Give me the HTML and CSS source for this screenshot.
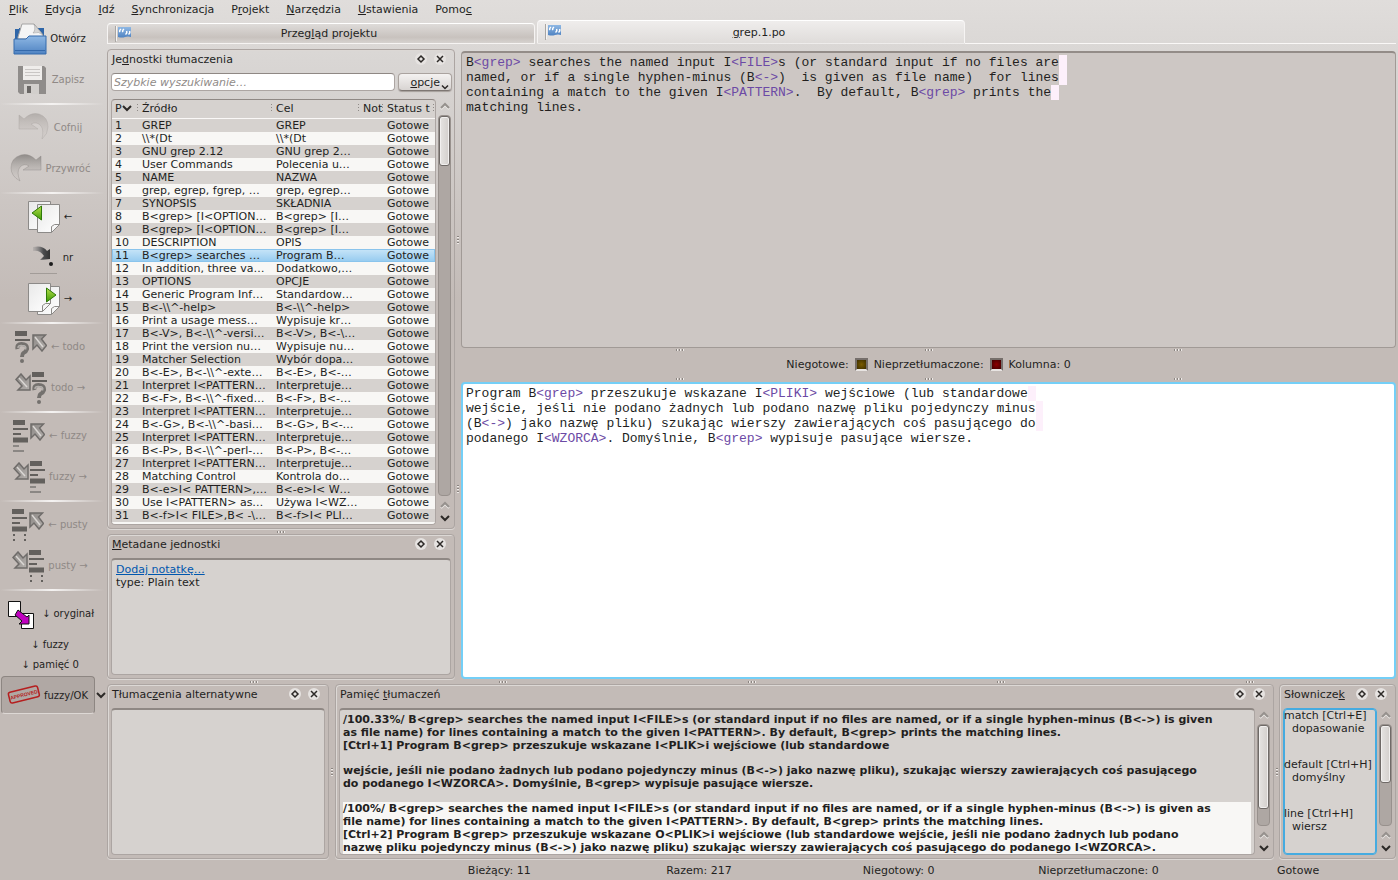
FILE: index.html
```html
<!DOCTYPE html>
<html lang="pl">
<head>
    <meta charset="UTF-8">
    <meta name="viewport" content="width=device-width, initial-scale=1.0">
    <title>grep.1.po - Lokalize</title>
    <link rel="stylesheet" href="styles.css">
</head>
<body>
    <svg class="defs" width="0" height="0" aria-hidden="true">
        <defs>
            <linearGradient id="gBlue" x1="0" y1="0" x2="0" y2="1"><stop offset="0" stop-color="#8fb8e4"/><stop offset="1" stop-color="#4f83c2"/></linearGradient>
            <linearGradient id="gUndo" x1="0" y1="0" x2="0" y2="1"><stop offset="0" stop-color="#b3aeab"/><stop offset="1" stop-color="#c8c2be" stop-opacity="0"/></linearGradient>
            <linearGradient id="gRedo" x1="0" y1="0" x2="0" y2="1"><stop offset="0" stop-color="#8f8b88"/><stop offset="1" stop-color="#c4bfbc" stop-opacity="0"/></linearGradient>
            <linearGradient id="gGreen" x1="0" y1="0" x2="0" y2="1"><stop offset="0" stop-color="#b5e04a"/><stop offset="1" stop-color="#3f9a06"/></linearGradient>
            <linearGradient id="gPage" x1="0" y1="0" x2="1" y2="1"><stop offset="0" stop-color="#e9e9e9"/><stop offset="1" stop-color="#ffffff"/></linearGradient>
            <linearGradient id="gArrow" x1="0" y1="0" x2="1" y2="1"><stop offset="0" stop-color="#8c8885"/><stop offset="1" stop-color="#b3afac"/></linearGradient>
            <linearGradient id="gJump" x1="0" y1="0" x2="1" y2="0"><stop offset="0" stop-color="#77777a" stop-opacity="0.2"/><stop offset="0.6" stop-color="#4c4d4f"/><stop offset="1" stop-color="#333333"/></linearGradient>
        </defs>
        <symbol id="flag" viewBox="0 0 16 16">
            <path d="M.5 0v16" stroke="#a9a6a3"/><path d="M1.500 0v15" stroke="#f4f4f4"/>
            <path d="M3 1h13v10q-3-1-6 0t-7 0z" fill="url(#gBlue)"/>
            <path d="M5 6q-1-1.500 1-3M8 6q-1-1.500 1-3M11.500 5q1 2-1 3.500M14.500 5q1 2-1 3.500" fill="none" stroke="#fff" stroke-width="1.500"/>
        </symbol>
        <symbol id="upleft" viewBox="0 0 15 18">
            <path d="M1 1h12.500L9.500 5l5 6.500-4.500 5.500-5-6-4 4z" fill="url(#gArrow)" stroke="#6f6c6a" stroke-width="1.500"/>
            <path d="M3 3l8 10" stroke="#dad7d4" stroke-width="1.500"/>
        </symbol>
        <symbol id="downright" viewBox="0 0 16 18">
            <path d="M6 1l5 6 4-4v14H3l4-4-6-6.500z" fill="url(#gArrow)" stroke="#6f6c6a" stroke-width="1.500"/>
            <path d="M4 5l8 9" stroke="#dad7d4" stroke-width="1.500"/>
        </symbol>
        <symbol id="bars" viewBox="0 0 15 32">
            <path d="M0 2.500h12M0 20h15" stroke="#63605d" stroke-width="5"/>
            <path d="M0 9h15M0 14h8" stroke="#63605d" stroke-width="2"/>
        </symbol>
        <symbol id="question" viewBox="0 0 15 32">
            <path d="M0 2.500h12" stroke="#63605d" stroke-width="5"/><path d="M0 9h15" stroke="#63605d" stroke-width="2"/>
            <path d="M2.500 18q-1-5 4-5 6 0 5.500 5-1 3-3.500 4-1.500 1-1.500 4" fill="none" stroke="#74716e" stroke-width="4"/>
            <path d="M3 17q0-3 4-2.500 5 0 3.500 4" fill="none" stroke="#b3afac" stroke-width="1.500"/>
            <circle cx="7" cy="30" r="2" fill="#74716e"/>
        </symbol>
        <symbol id="page" viewBox="0 0 23 29">
            <path d="M.5.500h22v20l-8 8H.5z" fill="url(#gPage)" stroke="#8c8a88"/>
            <path d="M22.500 20.500h-5l-3 2v6z" fill="#f6f6f6" stroke="#8c8a88"/>
        </symbol>
        <symbol id="down" viewBox="0 0 10 8"><path d="M1 2l4 4 4-4" fill="none" stroke="#2c2927" stroke-width="2"/></symbol>
        <symbol id="up" viewBox="0 0 10 8"><path d="M1 7l4-4 4 4" fill="none" stroke="#f0eeec" stroke-width="2"/><path d="M1 6l4-4 4 4" fill="none" stroke="#96918d" stroke-width="2"/></symbol>
        <symbol id="float" viewBox="0 0 12 12"><circle cx="6" cy="6" r="6" fill="#e6e3e1"/><path d="M6 3l3 3-3 3-3-3z" fill="none" stroke="#2c2927" stroke-width="1.500"/></symbol>
        <symbol id="close" viewBox="0 0 12 12"><circle cx="6" cy="6" r="6" fill="#e6e3e1"/><path d="M3 3l6 6M9 3l-6 6" fill="none" stroke="#2c2927" stroke-width="1.500"/></symbol>
    </svg>

    <nav class="menubar">
        <button><u>P</u>lik</button>
        <button><u>E</u>dycja</button>
        <button><u>I</u>dź</button>
        <button><u>S</u>ynchronizacja</button>
        <button>P<u>r</u>ojekt</button>
        <button><u>N</u>arzędzia</button>
        <button><u>U</u>stawienia</button>
        <button>Pomo<u>c</u></button>
    </nav>

    <div class="window">
        <div class="toolbar">
            <button class="tool">
                <svg class="icon" viewBox="0 0 32 32">
                    <path d="M1 6h4v-1h25v20H1z" fill="#2f66a8"/>
                    <path d="M4 14L8 1h12l9 11v4H4z" fill="#f5f5f5" stroke="#a5a5a5"/><path d="M20 1q2 6-1 9 6-2 10 2z" fill="#d5d5d5" stroke="#999" stroke-width=".5"/>
                    <path d="M0 16h12l3-3h17v18H0z" fill="url(#gBlue)" stroke="#356aac"/><path d="M1 27.500h30" stroke="#3469ab"/>
                </svg>Otwórz
            </button>
            <button class="tool" disabled>
                <svg class="icon" viewBox="0 0 32 32">
                    <path d="M2 2h26l2 2v26H4l-2-2z" fill="#8f8c8a"/><path d="M7 2h19v14H7z" fill="#efedeb"/>
                    <path d="M9 5.500h15M9 8.500h15M9 11.500h15" stroke="#c9c6c4"/><path d="M8 20h15v10H8z" fill="#d2cfcc"/><path d="M11 22h4v7h-4z" fill="#6a6765"/>
                </svg>Zapisz
            </button>
            <hr>
            <button class="tool" disabled>
                <svg class="icon" viewBox="0 0 32 32">
                    <path d="M1 3l5 4q7-7 15-5 9 3 9 13 0 7-6 12 2-9-1-13-4-5-10-2l7 5H1z" fill="url(#gUndo)" stroke="#a9a5a2" stroke-opacity=".4"/>
                </svg>Cofnij
            </button>
            <button class="tool" disabled>
                <svg class="icon" viewBox="0 0 32 32">
                    <path d="M31 3l-5 4Q19 0 11 2 1 5 1 15q0 8 9 13-4-9 0-14 4-4 9-1l-6 4h18z" fill="url(#gRedo)" stroke="#8e8a87" stroke-opacity=".4"/>
                </svg>Przywróć
            </button>
            <hr>
            <button class="tool">
                <svg class="icon" viewBox="0 0 32 32">
                    <use href="#page" x="0" y="0" width="23" height="29"/><use href="#page" x="9" y="3" width="23" height="29"/>
                    <path d="M4 12L13.500 5v14z" fill="url(#gGreen)" stroke="#2f7a08"/>
                </svg>←
            </button>
            <button class="tool">
                <svg class="icon" viewBox="0 0 32 32">
                    <path d="M6 5q10-2 14 4l3-2v10l-10 1 4-4q-4-6-11-5z" fill="url(#gJump)"/><circle cx="24" cy="22" r="2" fill="#1c1c1c"/>
                    <path d="M3 31.500h27" stroke="#a29c98"/>
                </svg>nr
            </button>
            <button class="tool">
                <svg class="icon" viewBox="0 0 32 32">
                    <use href="#page" x="9" y="3" width="23" height="29"/><use href="#page" x="0" y="0" width="23" height="29"/>
                    <path d="M28 12L18.500 5v14z" fill="url(#gGreen)" stroke="#2f7a08"/>
                </svg>→
            </button>
            <hr>
            <button class="tool" disabled>
                <svg class="icon" viewBox="0 0 32 32"><use href="#question" width="15" height="32"/><use href="#upleft" x="17" y="3" width="15" height="18"/></svg>← todo
            </button>
            <button class="tool" disabled>
                <svg class="icon" viewBox="0 0 32 32"><use href="#downright" y="1" width="16" height="18"/><use href="#question" x="17" width="15" height="32"/></svg>todo →
            </button>
            <hr>
            <button class="tool" disabled>
                <svg class="icon" viewBox="0 0 32 32"><use href="#bars" width="15" height="32"/><path d="M0 26h6M0 31h11" stroke="#8b8784" stroke-width="2"/><use href="#upleft" x="17" y="3" width="15" height="18"/></svg>← fuzzy
            </button>
            <button class="tool" disabled>
                <svg class="icon" viewBox="0 0 32 32"><use href="#downright" y="1" width="16" height="18"/><use href="#bars" x="17" width="15" height="32"/><path d="M17 26h6M17 31h11" stroke="#8b8784" stroke-width="2"/></svg>fuzzy →
            </button>
            <hr>
            <button class="tool" disabled>
                <svg class="icon" viewBox="0 0 32 32"><use href="#bars" width="15" height="32"/><path d="M2 25v7M13 25v7" stroke="#63605d" stroke-width="2" stroke-dasharray="2 3"/><use href="#upleft" x="17" y="3" width="15" height="18"/></svg>← pusty
            </button>
            <button class="tool" disabled>
                <svg class="icon" viewBox="0 0 32 32"><use href="#downright" y="1" width="16" height="18"/><use href="#bars" x="17" width="15" height="32"/><path d="M19 25v7M30 25v7" stroke="#63605d" stroke-width="2" stroke-dasharray="2 3"/></svg>pusty →
            </button>
            <hr>
            <button class="tool">
                <svg class="icon" viewBox="0 0 32 32">
                    <path d="M2.500 3.500h12v15h-12zM15.500 15.500h12v15h-12z" fill="#fff" stroke="#111"/>
                    <path d="M12 12l9 7 2-2v9H13l3-3-7-6z" fill="#c000c0" stroke="#111"/>
                </svg>↓ oryginał
            </button>
            <button class="tool short">↓ fuzzy</button>
            <button class="tool short">↓ pamięć 0</button>
            <div class="approve">
                <button class="tool pressed">
                    <svg class="icon" viewBox="0 0 32 32">
                        <g transform="rotate(-14 16 16)"><rect x="1" y="10" width="30" height="11" rx="2" fill="none" stroke="#b51f1f" stroke-width="1.500"/>
                        <text x="16" y="17.500" class="stamp">APPROVED</text></g>
                    </svg>fuzzy/OK
                </button>
                <button class="drop" aria-label="Stan"><svg width="10" height="8"><use href="#down"/></svg></button>
            </div>
        </div>

        <div class="main">
            <div class="tabs">
                <button class="tab"><svg width="16" height="16"><use href="#flag"/></svg><span>Przeg<u>l</u>ąd projektu</span></button>
                <button class="tab active"><svg width="16" height="16"><use href="#flag"/></svg><span><u>g</u>rep.1.po</span></button>
                <div class="tab-rest"></div>
            </div>

            <div class="upper">
                <div class="left">
                    <section class="dock units">
                        <header><h2>Je<u>d</u>nostki tłumaczenia</h2><button aria-label="Odepnij"><svg width="12" height="12"><use href="#float"/></svg></button><button aria-label="Zamknij"><svg width="12" height="12"><use href="#close"/></svg></button></header>
                        <div class="search">
                            <input type="text" placeholder="Szybkie wyszukiwanie…" aria-label="Szybkie wyszukiwanie">
                            <button class="options"><u>o</u>pcje<svg width="8" height="6"><use href="#down"/></svg></button>
                        </div>
                        <div class="body">
                            <div class="panel list">
                                <table>
                                    <colgroup><col class="c-id"><col class="c-source"><col class="c-target"><col class="c-notes"><col></colgroup>
                                    <thead>
                                        <tr><th>P<svg width="10" height="8"><use href="#down"/></svg></th><th>Źródło</th><th>Cel</th><th>Not</th><th>Status t</th></tr>
                                    </thead>
                                    <tbody id="units"></tbody>
                                </table>
                            </div>
                            <div class="scroll"><svg width="10" height="8"><use href="#up"/></svg><div class="track"><div class="thumb s-units"></div></div><svg width="10" height="8"><use href="#up"/></svg><svg width="10" height="8"><use href="#down"/></svg></div>
                        </div>
                    </section>
                    <div class="split-h"><i></i></div>
                    <section class="dock meta">
                        <header><h2><u>M</u>etadane jednostki</h2><button aria-label="Odepnij"><svg width="12" height="12"><use href="#float"/></svg></button><button aria-label="Zamknij"><svg width="12" height="12"><use href="#close"/></svg></button></header>
                        <div class="body"><div class="panel notes"><a href="#">Dodaj notatkę…</a><br>type: Plain text</div></div>
                    </section>
                </div>
                <div class="split-v"><i></i><i></i></div>
                <div class="editor">
                    <div class="source">B<b>&lt;grep&gt;</b> searches the named input I<b>&lt;FILE&gt;</b>s (or standard input if no files are<mark> </mark>
named, or if a single hyphen-minus (B<b>&lt;-&gt;</b>)  is given as file name)  for lines<mark> </mark>
containing a match to the given I<b>&lt;PATTERN&gt;</b>.  By default, B<b>&lt;grep&gt;</b> prints the<mark> </mark>
matching lines.</div>
                    <div class="split-h"><i></i><i></i><i></i></div>
                    <div class="leds">
                        <span>Niegotowe:</span><span class="led amber"></span><span>Nieprzetłumaczone:</span><span class="led red"></span><span>Kolumna: 0</span>
                    </div>
                    <div class="split-h"><i></i><i></i><i></i></div>
                    <div class="target" contenteditable="true" spellcheck="false">Program B<b>&lt;grep&gt;</b> przeszukuje wskazane I<b>&lt;PLIKI&gt;</b> wejściowe (lub standardowe<mark> </mark>
wejście, jeśli nie podano żadnych lub podano nazwę pliku pojedynczy minus<mark> </mark>
(B<b>&lt;-&gt;</b>) jako nazwę pliku) szukając wierszy zawierających coś pasującego do<mark> </mark>
podanego I<b>&lt;WZORCA&gt;</b>. Domyślnie, B<b>&lt;grep&gt;</b> wypisuje pasujące wiersze.</div>
                </div>
            </div>

            <div class="split-h"><i></i><i></i><i></i><i></i><i></i></div>

            <div class="lower">
                <section class="dock alt">
                    <header><h2>Tłumac<u>z</u>enia alternatywne</h2><button aria-label="Odepnij"><svg width="12" height="12"><use href="#float"/></svg></button><button aria-label="Zamknij"><svg width="12" height="12"><use href="#close"/></svg></button></header>
                    <div class="body"><div class="panel"></div></div>
                </section>
                <div class="split-v"><i></i></div>
                <section class="dock memory">
                    <header><h2>Pamięć <u>t</u>łumaczeń</h2><button aria-label="Odepnij"><svg width="12" height="12"><use href="#float"/></svg></button><button aria-label="Zamknij"><svg width="12" height="12"><use href="#close"/></svg></button></header>
                    <div class="body">
                        <div class="panel matches">
                            <div class="match">
                                <p>/100.33%/ B&lt;grep&gt; searches the named input I&lt;FILE&gt;s (or standard input if no files are named, or if a single hyphen-minus (B&lt;-&gt;) is given<br>as file name) for lines containing a match to the given I&lt;PATTERN&gt;. By default, B&lt;grep&gt; prints the matching lines.<br>[Ctrl+1] Program B&lt;grep&gt; przeszukuje wskazane I&lt;PLIK&gt;i wejściowe (lub standardowe</p>
                                <p>wejście, jeśli nie podano żadnych lub podano pojedynczy minus (B&lt;-&gt;) jako nazwę pliku), szukając wierszy zawierających coś pasującego<br>do podanego I&lt;WZORCA&gt;. Domyślnie, B&lt;grep&gt; wypisuje pasujące wiersze.</p>
                            </div>
                            <div class="match">
                                <p>/100%/ B&lt;grep&gt; searches the named input I&lt;FILE&gt;s (or standard input if no files are named, or if a single hyphen-minus (B&lt;-&gt;) is given as<br>file name) for lines containing a match to the given I&lt;PATTERN&gt;. By default, B&lt;grep&gt; prints the matching lines.<br>[Ctrl+2] Program B&lt;grep&gt; przeszukuje wskazane O&lt;PLIK&gt;i wejściowe (lub standardowe wejście, jeśli nie podano żadnych lub podano<br>nazwę pliku pojedynczy minus (B&lt;-&gt;) jako nazwę pliku) szukając wierszy zawierających coś pasującego do podanego I&lt;WZORCA&gt;.</p>
                            </div>
                        </div>
                        <div class="scroll"><svg width="10" height="8"><use href="#up"/></svg><div class="track"><div class="thumb s-memory"></div></div><svg width="10" height="8"><use href="#up"/></svg><svg width="10" height="8"><use href="#down"/></svg></div>
                    </div>
                </section>
                <div class="split-v"><i></i></div>
                <section class="dock glossary">
                    <header><h2>Słownicze<u>k</u></h2><button aria-label="Odepnij"><svg width="12" height="12"><use href="#float"/></svg></button><button aria-label="Zamknij"><svg width="12" height="12"><use href="#close"/></svg></button></header>
                    <div class="body">
                        <dl class="panel terms">
                            <dt>match [Ctrl+E]</dt><dd>dopasowanie</dd>
                            <dt>default [Ctrl+H]</dt><dd>domyślny</dd>
                            <dt>line [Ctrl+H]</dt><dd>wiersz</dd>
                        </dl>
                        <div class="scroll"><svg width="10" height="8"><use href="#up"/></svg><div class="track"><div class="thumb s-glossary"></div></div><svg width="10" height="8"><use href="#up"/></svg><svg width="10" height="8"><use href="#down"/></svg></div>
                    </div>
                </section>
            </div>
        </div>
    </div>

    <footer class="statusbar">
        <span>Bieżący: 11</span><span>Razem: 217</span><span>Niegotowy: 0</span><span>Nieprzetłumaczone: 0</span><span>Gotowe</span>
    </footer>

    <script>
        const units = [
            ['GREP', 'GREP'],
            ['\\\\*(Dt', '\\\\*(Dt'],
            ['GNU grep 2.12', 'GNU grep 2…'],
            ['User Commands', 'Polecenia u…'],
            ['NAME', 'NAZWA'],
            ['grep, egrep, fgrep, …', 'grep, egrep…'],
            ['SYNOPSIS', 'SKŁADNIA'],
            ['B<grep> [I<OPTION…', 'B<grep> [I…'],
            ['B<grep> [I<OPTION…', 'B<grep> [I…'],
            ['DESCRIPTION', 'OPIS'],
            ['B<grep> searches …', 'Program B…'],
            ['In addition, three va…', 'Dodatkowo,…'],
            ['OPTIONS', 'OPCJE'],
            ['Generic Program Inf…', 'Standardow…'],
            ['B<-\\\\^-help>', 'B<-\\\\^-help>'],
            ['Print a usage mess…', 'Wypisuje kr…'],
            ['B<-V>, B<-\\\\^-versi…', 'B<-V>, B<-\\…'],
            ['Print the version nu…', 'Wypisuje nu…'],
            ['Matcher Selection', 'Wybór dopa…'],
            ['B<-E>, B<-\\\\^-exte…', 'B<-E>, B<-…'],
            ['Interpret I<PATTERN…', 'Interpretuje…'],
            ['B<-F>, B<-\\\\^-fixed…', 'B<-F>, B<-…'],
            ['Interpret I<PATTERN…', 'Interpretuje…'],
            ['B<-G>, B<-\\\\^-basi…', 'B<-G>, B<-…'],
            ['Interpret I<PATTERN…', 'Interpretuje…'],
            ['B<-P>, B<-\\\\^-perl-…', 'B<-P>, B<-…'],
            ['Interpret I<PATTERN…', 'Interpretuje…'],
            ['Matching Control', 'Kontrola do…'],
            ['B<-e>I< PATTERN>,…', 'B<-e>I< W…'],
            ['Use I<PATTERN> as…', 'Używa I<WZ…'],
            ['B<-f>I< FILE>,B< -\\…', 'B<-f>I< PLI…'],
            ['Obtain patterns fro…', 'Pobiera wz…']
        ];
        const current = 11;

        const tbody = document.getElementById('units');
        units.forEach((unit, i) => {
            const row = tbody.insertRow();
            if (i + 1 === current) row.className = 'current';
            [i + 1, unit[0], unit[1], '', 'Gotowe'].forEach(text => {
                row.insertCell().textContent = text;
            });
        });
    </script>
</body>
</html>
```
FILE: styles.css
```css
* { box-sizing: border-box; }
body { margin: 0; height: 100vh; display: flex; flex-direction: column; font: 11px/13px "DejaVu Sans", sans-serif; color: #231f1e; background: linear-gradient(#e0dddb, #d9d6d4 60px, #c3bbb7 300px); overflow: hidden; }
button { font: inherit; color: inherit; background: none; border: none; padding: 0; }
svg { flex: none; display: block; }
.defs { position: absolute; }

.menubar { height: 18px; flex: none; display: flex; gap: 17px; padding-left: 9px; }
.window { flex: 1; min-height: 0; display: flex; }

/* toolbar */
.toolbar { width: 107px; flex: none; display: flex; flex-direction: column; font-size: 10px; }
.tool { width: 100px; height: 41px; display: flex; align-items: center; justify-content: center; gap: 4px; white-space: nowrap; }
.tool:disabled { color: #8f8986; }
.icon { width: 32px; height: 32px; overflow: visible; }
.toolbar hr { width: 104px; height: 7px; margin: 0; border: none; background: linear-gradient(90deg, transparent, #f5f3f2, transparent) 0 3px / 100% 2px no-repeat; }
.short { height: 20px; }
.approve { display: flex; margin-top: 2px; }
.pressed { width: 94px; height: 38px; margin-left: 1px; background: #b0a8a4; border: 1px solid #8d8682; border-bottom-color: #ddd8d5; border-radius: 4px; }
.drop { width: 12px; display: flex; align-items: center; justify-content: center; }
.stamp { font: bold 5px "Liberation Sans", sans-serif; fill: #b51f1f; text-anchor: middle; }

.main { flex: 1; min-width: 0; display: flex; flex-direction: column; padding-right: 2px; }

/* tabs */
.tabs { height: 31px; flex: none; display: flex; align-items: flex-start; padding-top: 2px; }
.tab { width: 428px; height: 24px; display: flex; align-items: center; padding: 0 7px; border: 1px solid #f6f4f3; border-top-color: #fff; border-radius: 4px 4px 0 0; background: linear-gradient(#dedbd9, #c8c2be 70%, #d6d2cf); }
.tab:first-child { height: 21px; margin: 3px 2px 0 0; }
.tab span { flex: 1; text-align: center; }
.tab.active { background: linear-gradient(#efedec, #dfdcda); border-bottom-color: transparent; }
.tab-rest { flex: 1; height: 24px; border-bottom: 1px solid #faf8f7; }

/* docks */
.upper { flex: 1; min-height: 0; display: flex; }
.left { width: 348px; flex: none; display: flex; flex-direction: column; }
.dock { display: flex; flex-direction: column; padding: 0 3px 3px; border: 1px solid #aca5a2; border-radius: 4px; box-shadow: inset 1px 1px #dcd8d5, 0 1px #dcd8d5; }
.dock header { height: 20px; flex: none; display: flex; align-items: center; gap: 7px; padding: 0 5px 2px 1px; }
.dock h2 { flex: 1; margin: 0; font: inherit; white-space: nowrap; }
.units { flex: 1; min-height: 0; }
.meta { height: 145px; flex: none; }
.lower { height: 175px; flex: none; display: flex; }
.alt { width: 222px; flex: none; }
.memory { flex: 1; min-width: 0; }
.glossary { width: 117px; flex: none; }
.body { flex: 1; min-height: 0; display: flex; padding-top: 3px; }
.panel { flex: 1; min-width: 0; overflow: hidden; margin: 0; background: #d6d2cf; border: 1px solid #aca5a2; border-top: 2px solid #8f8884; border-radius: 4px; }

.search { display: flex; gap: 3px; padding: 3px 0 8px; margin-right: -1px; }
.search input { flex: 1; min-width: 0; height: 18px; padding: 0 2px; font: inherit; background: #fff; border: 1px solid #aca5a2; border-top-color: #8f8884; border-radius: 4px; }
.search input::placeholder { font-style: italic; color: #908b88; opacity: 1; }
.options { width: 54px; height: 18px; display: flex; align-items: center; justify-content: flex-end; background: linear-gradient(#f4f2f1, #d8d4d2); border: 1px solid #aaa39f; border-bottom-color: #7e7773; border-radius: 4px; box-shadow: 0 1px 1px #a59e9a; }
.options svg { align-self: flex-end; margin: 0 2px 0 1px; }
.units .body { padding-top: 0; }

/* unit list */
.list { flex: 1; border-width: 1px; }
table { width: 100%; table-layout: fixed; border-collapse: collapse; }
.c-id { width: 27px; }
.c-source { width: 134px; }
.c-target { width: 87px; }
.c-notes { width: 24px; }
th, td { padding: 0 0 0 3px; text-align: left; font-weight: normal; white-space: nowrap; overflow: hidden; height: 13px; }
th { height: 18px; background: repeating-linear-gradient(#8f8a87 0 1px, transparent 1px 3px) right 1px center / 1px 9px no-repeat; border-bottom: 1px solid #faf8f7; }
th svg { display: inline-block; vertical-align: 0; }
tbody tr { background: #d6d2cf; }
tbody tr:nth-child(even) { background: #f8f7f5; }
tbody tr.current { background: linear-gradient(#c8e5f8, #94caef); box-shadow: inset 0 0 0 1px #8ac4ec; }

.scroll { width: 15px; flex: none; display: flex; flex-direction: column; align-items: center; gap: 5px; padding: 3px 0 3px 2px; }
.track { width: 13px; flex: 1; background: #aea7a3; border: 1px solid #98918d; border-radius: 4px; }
.thumb { width: 11px; background: linear-gradient(90deg, #e6e4e2, #d3cfcc); border: 1px solid #6f6a67; border-radius: 3px; box-shadow: inset 0 0 0 1px #f2f0ef; }
.s-units { height: 50px; }
.s-memory { height: 84px; }
.s-glossary { height: 58px; }

.notes { padding: 3px 4px; }
.notes a { color: #0057ae; }

/* splitters */
.split-h { height: 5px; flex: none; display: flex; align-items: center; justify-content: center; gap: 241px; }
.split-v { width: 6px; flex: none; display: flex; flex-direction: column; align-items: center; justify-content: center; gap: 241px; }
.lower .split-v { width: 5px; }
.lower .alt + .split-v { width: 6px; }
.split-h i { width: 8px; height: 2px; background: repeating-linear-gradient(90deg, #8b8581 0 1px, #eeebe9 1px 2px, transparent 2px 3px); }
.split-v i { width: 2px; height: 8px; background: repeating-linear-gradient(#8b8581 0 1px, #eeebe9 1px 2px, transparent 2px 3px); }

/* editor */
.editor { flex: 1; min-width: 0; display: flex; flex-direction: column; padding-top: 2px; }
.source, .target { flex: 1; min-height: 0; padding: 2px 4px; overflow: hidden; white-space: pre; font: 13px/15px "Liberation Mono", monospace; border-radius: 4px; outline: none; }
.source { background: #cdc7c4; border: 1px solid #a19a96; border-top: 2px solid #938c88; }
.target { padding: 2px 3px; background: #fff; border: 2px solid #74cff7; }
.source b, .target b { font-weight: normal; color: #6c4aa5; }
mark { background: #fdf0fb; }
.leds { height: 24px; flex: none; display: flex; align-items: center; justify-content: center; gap: 6px; }
.led { width: 13px; height: 13px; border: 2px solid #766f6b; border-bottom-color: #e8e4e2; }
.amber { background: radial-gradient(#7a5c00, #3d2e00); }
.red { background: radial-gradient(#8c0000, #420000); }

/* memory and glossary */
.matches { padding: 3px 3px 0; font-weight: bold; white-space: nowrap; }
.match p { margin: 0 0 12px; }
.match:nth-child(even) { background: #f8f7f5; }
.match:nth-child(even) p { margin: 0; }
.terms { border: 1px solid #45abe0; box-shadow: inset 0 0 0 1px #45abe0; }
.terms dd { margin: 0 0 23px 8px; }
.terms dt { white-space: nowrap; }

.statusbar { height: 21px; flex: none; display: grid; grid-template-columns: repeat(7, 1fr); align-items: center; padding-top: 2px; text-align: center; }
.statusbar span:first-child { grid-column: 3; }
```
